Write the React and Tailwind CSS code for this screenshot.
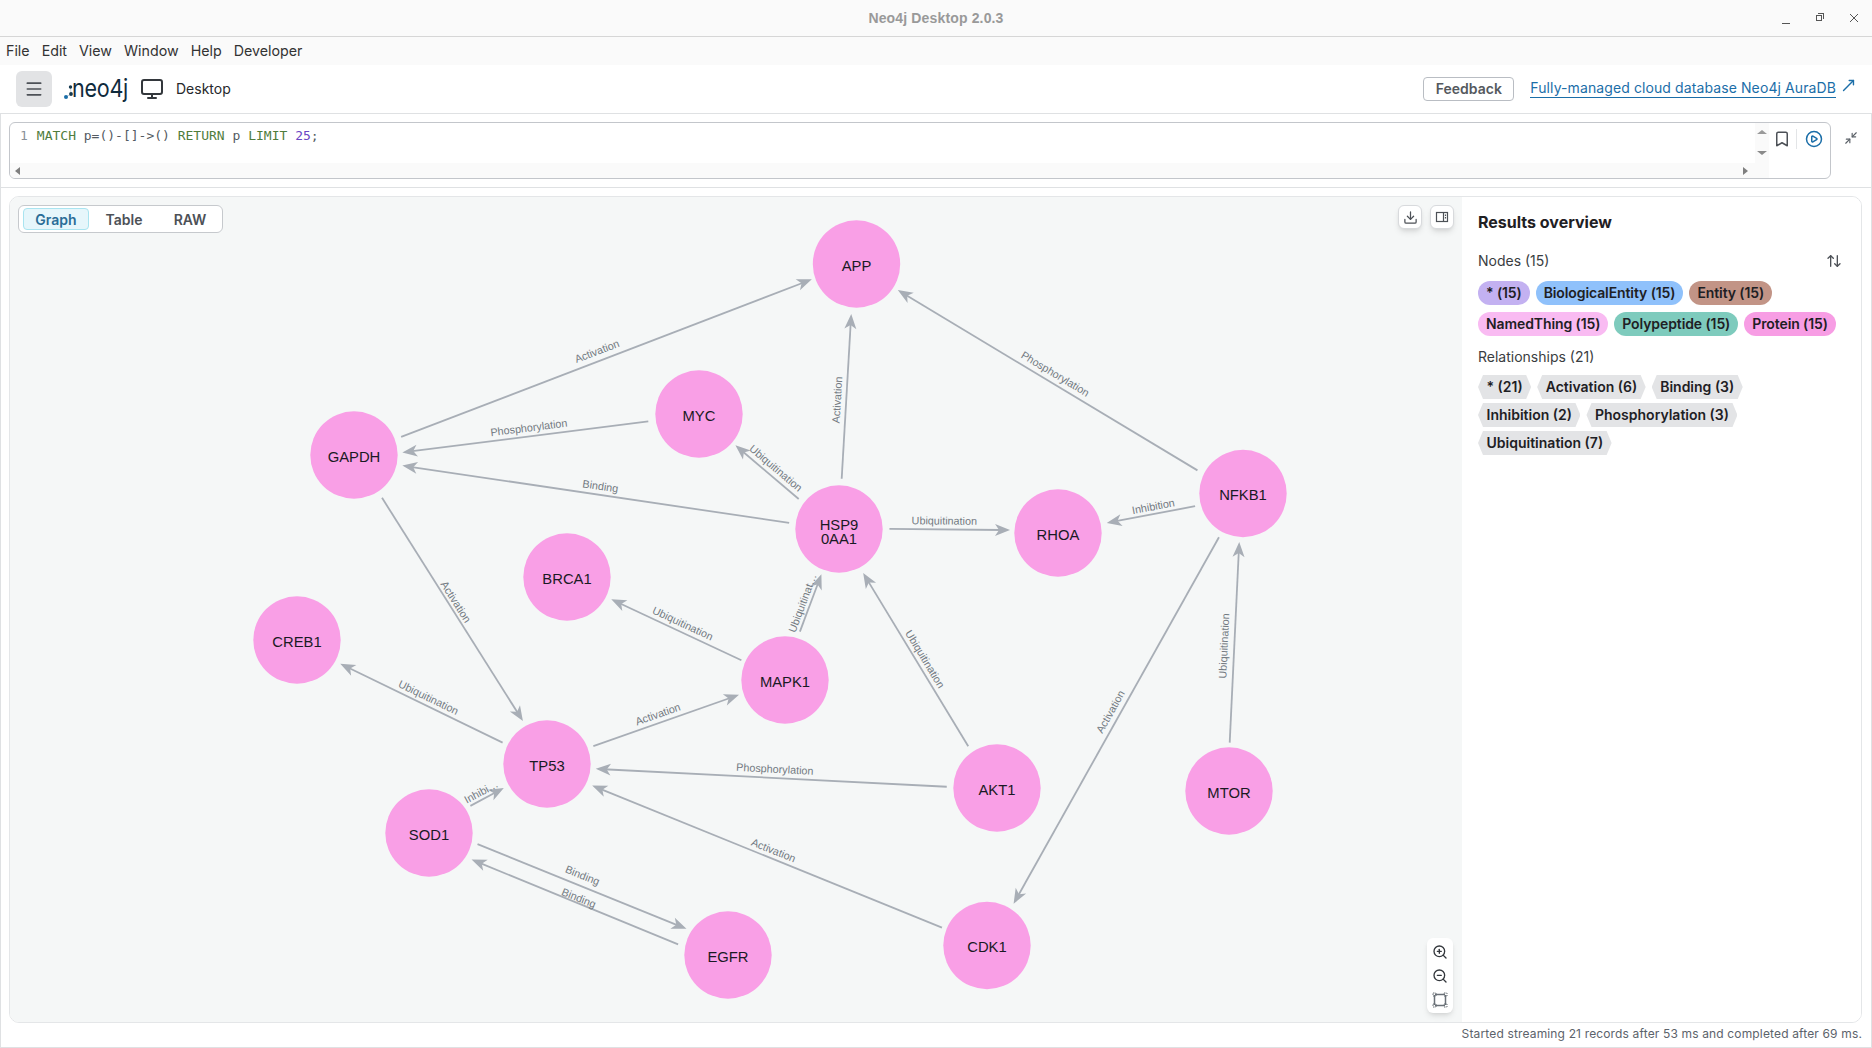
import { ArrowUpDown, Bookmark, CirclePlay, Download, Menu, Minimize2, Monitor, MoveUpRight, ZoomIn, ZoomOut } from "lucide-react";

const ui = "font-['Inter','Liberation_Sans',sans-serif]";
const s = 1872 / 1568;

const nodes = [
  { name: "APP", x: 856.5, y: 264 },
  { name: "MYC", x: 699, y: 414 },
  { name: "GAPDH", x: 354, y: 455 },
  { name: "HSP9", line2: "0AA1", x: 839, y: 529 },
  { name: "RHOA", x: 1058, y: 533 },
  { name: "NFKB1", x: 1243, y: 493.5 },
  { name: "BRCA1", x: 567, y: 577 },
  { name: "CREB1", x: 297, y: 640 },
  { name: "MAPK1", x: 785, y: 680 },
  { name: "TP53", x: 547, y: 764 },
  { name: "AKT1", x: 997, y: 788 },
  { name: "MTOR", x: 1229, y: 791 },
  { name: "SOD1", x: 429, y: 833 },
  { name: "EGFR", x: 728, y: 955 },
  { name: "CDK1", x: 987, y: 945.5 },
];

const edges = [
  { from: [336, 366], to: [680, 234], label: "Activation", at: [500, 294] },
  { from: [543, 353], to: [337, 379], label: "Phosphorylation", at: [443, 358] },
  { from: [661, 438], to: [337, 390], label: "Binding", at: [503, 407] },
  { from: [669, 418], to: [616, 373], label: "Ubiquitination", at: [650, 392] },
  { from: [705, 401], to: [713, 263], label: "Activation", at: [701, 335] },
  { from: [1003, 394], to: [752, 243], label: "Phosphorylation", at: [884, 313] },
  { from: [745, 443], to: [846, 444], label: "Ubiquitination", at: [791, 436] },
  { from: [1001, 424], to: [927, 438], label: "Inhibition", at: [966, 424] },
  { from: [320, 417], to: [438, 604], label: "Activation", at: [382, 504] },
  { from: [670, 529], to: [688, 481], label: "Ubiquitinat…", at: [672, 505] },
  { from: [621, 553], to: [512, 502], label: "Ubiquitination", at: [572, 522] },
  { from: [811, 625], to: [723, 480], label: "Ubiquitination", at: [775, 552] },
  { from: [421, 622], to: [285, 556], label: "Ubiquitination", at: [359, 584] },
  { from: [497, 625], to: [619, 582], label: "Activation", at: [551, 598] },
  { from: [793, 659], to: [499, 644], label: "Phosphorylation", at: [649, 644] },
  { from: [789, 777], to: [496, 658], label: "Activation", at: [648, 712] },
  { from: [1021, 450], to: [849, 757], label: "Activation", at: [930, 596] },
  { from: [1030, 622], to: [1038, 454], label: "Ubiquitination", at: [1025, 541] },
  { from: [394, 675], to: [422, 660], label: "Inhibi…", at: [403, 663] },
  { from: [400, 707], to: [575, 778], label: "Binding", at: [488, 733] },
  { from: [568, 791], to: [395, 720], label: "Binding", at: [485, 752] },
];

const nodeChips = [
  { label: "* (15)", color: "bg-[#c3b1f1]" },
  { label: "BiologicalEntity (15)", color: "bg-[#8fc1fb]" },
  { label: "Entity (15)", color: "bg-[#c29486]" },
  { label: "NamedThing (15)", color: "bg-[#f9bbf2]" },
  { label: "Polypeptide (15)", color: "bg-[#7ecbbd]" },
  { label: "Protein (15)", color: "bg-[#f79de4]" },
];

const relChips = ["* (21)", "Activation (6)", "Binding (3)", "Inhibition (2)", "Phosphorylation (3)", "Ubiquitination (7)"];

function Edge({ edge }) {
  const x1 = edge.from[0] * s;
  const y1 = edge.from[1] * s;
  const x2 = edge.to[0] * s;
  const y2 = edge.to[1] * s;
  const angle = (Math.atan2(y2 - y1, x2 - x1) * 180) / Math.PI;
  const upright = angle > 90 || angle < -90 ? angle + 180 : angle;
  return (
    <g>
      <line x1={x1} y1={y1} x2={x2 - 8 * Math.cos((angle * Math.PI) / 180)} y2={y2 - 8 * Math.sin((angle * Math.PI) / 180)} stroke="#a8aeb6" strokeWidth="1.8" />
      <polygon points="0,0 -15,-6 -11,0 -15,6" fill="#a8aeb6" transform={`translate(${x2} ${y2}) rotate(${angle})`} />
      <text
        x={edge.at[0] * s}
        y={edge.at[1] * s}
        transform={`rotate(${upright} ${edge.at[0] * s} ${edge.at[1] * s})`}
        textAnchor="middle"
        dominantBaseline="central"
        fontSize="10.8"
        fill="#737a82"
        fontFamily="Liberation Sans, sans-serif"
      >
        {edge.label}
      </text>
    </g>
  );
}

function GraphNode({ node }) {
  return (
    <g>
      <circle cx={node.x} cy={node.y} r="43.7" fill="#f99fe6" />
      <text textAnchor="middle" fontSize="14.8" fill="#1a1a24" fontFamily="Liberation Sans, sans-serif">
        {node.line2 ? (
          <>
            <tspan x={node.x} y={node.y + 1}>{node.name}</tspan>
            <tspan x={node.x} y={node.y + 15}>{node.line2}</tspan>
          </>
        ) : (
          <tspan x={node.x} y={node.y + 6.5}>{node.name}</tspan>
        )}
      </text>
    </g>
  );
}

function FitIcon() {
  return (
    <svg width="16" height="16" viewBox="0 0 16 16" fill="none" stroke="#6a7077" strokeWidth="1.5">
      <path d="M3 2.5h10M3 13.5h10M2.5 3v10M13.5 3v10" />
      <path d="M1 1h3v3H1zM12 1h3v3h-3zM1 12h3v3H1zM12 12h3v3h-3z" strokeWidth="1" strokeDasharray="1.5 1" />
    </svg>
  );
}

function SidePanelIcon() {
  return (
    <svg width="16" height="16" viewBox="0 0 16 16" fill="none" stroke="#4d5157" strokeWidth="1.2">
      <rect x="2.5" y="3.5" width="11" height="9" />
      <path d="M9.5 3.5v9" />
      <path d="M11.5 5.5v5" strokeDasharray="1.5 1" />
    </svg>
  );
}

function NeoLogo() {
  return (
    <div className="relative h-[28px] w-[66px]">
      <svg width="12" height="18" viewBox="0 0 12 18" className="absolute left-0 top-[9px]">
        <path d="M6.5 3L7 10L2 13" stroke="#9fb6c4" strokeWidth="0.6" fill="none" />
        <circle cx="6.5" cy="3" r="1.7" fill="#14394f" />
        <circle cx="7" cy="10" r="1.9" fill="#14394f" />
        <circle cx="2" cy="13" r="2" fill="#1b6ea8" />
      </svg>
      <span className="absolute left-[8px] top-[-3px] origin-left scale-x-[0.88] text-[24.5px] leading-[32px] tracking-[-0.3px] font-normal text-[#0f2b3d] font-['Inter',sans-serif]">neo4j</span>
    </div>
  );
}

export default function App() {
  return (
    <div className={`h-[1048px] w-[1872px] flex flex-col overflow-hidden bg-white text-[#1a1b1d] ${ui}`}>
      <div className="h-[37px] shrink-0 bg-[#fafafa] border-b border-[#d6d6d6] relative flex items-center justify-center">
        <span className="text-[14px] tracking-[0.15px] font-bold text-[#999999] font-['Liberation_Sans',sans-serif]">Neo4j Desktop 2.0.3</span>
        <div className="absolute right-[10px] top-[10px] flex items-center gap-[18px] text-[#555]">
          <span className="w-[16px] h-[16px] flex items-end justify-center pb-[2px]"><span className="block w-[8px] h-px bg-[#555]"></span></span>
          <span className="w-[16px] h-[16px] relative">
            <span className="absolute left-[4px] top-[5px] w-[6px] h-[6px] border border-[#555]"></span>
            <span className="absolute left-[6px] top-[3px] w-[6px] h-[6px] border-t border-r border-[#555]"></span>
          </span>
          <svg width="16" height="16" viewBox="0 0 16 16" stroke="#555" strokeWidth="1"><path d="M4 4l8 8M12 4l-8 8" /></svg>
        </div>
      </div>

      <div className="h-[28px] shrink-0 bg-[#fafafa] flex items-center px-[6px] gap-[12px] text-[14.25px] text-[#333] font-['Inter',sans-serif]">
        <span>File</span>
        <span>Edit</span>
        <span>View</span>
        <span>Window</span>
        <span>Help</span>
        <span>Developer</span>
      </div>

      <header className="h-[49px] shrink-0 flex items-center border-b border-[#dfe1e3] pl-[16px] pr-[15px]">
        <button className="w-[36px] h-[36px] rounded-[6px] bg-[#e2e3e5] flex items-center justify-center">
          <Menu size={20} color="#4d5157" />
        </button>
        <div className="ml-[12px]"><NeoLogo /></div>
        <Monitor size={24} color="#33373c" className="ml-[10px]" />
        <span className="ml-[12px] mb-[1px] text-[14px] text-[#26282b]">Desktop</span>
        <div className="ml-auto flex items-center mb-[1px]">
          <button className="w-[91px] h-[24px] rounded-[4px] border border-[#b9bdc3] text-[14px] font-semibold text-[#55595e]">Feedback</button>
          <a className="ml-[16px] text-[14px] tracking-[0.1px] leading-[18px] text-[#1b6ea8] border-b border-[#1b6ea8]">Fully-managed cloud database Neo4j AuraDB</a>
          <MoveUpRight size={17} color="#1b6ea8" className="ml-[4px] mb-[6px]" />
        </div>
      </header>

      <section className="h-[74px] shrink-0 border-x border-b border-[#dfe1e3] pl-[8px] pr-[6px] pt-[8px] flex">
        <div className="w-[1822px] h-[57px] rounded-[6px] border border-[#c3c6cb] flex overflow-hidden">
          <div className="w-[1759px] flex flex-col">
            <div className="h-[40px] flex">
              <div className="flex-1 pl-[10px] pt-[4px] text-[13px] leading-[18px] font-['DejaVu_Sans_Mono',monospace] whitespace-pre">
                <span className="text-[#8a9199]">1</span>
                <span className="ml-[9px] text-[#4f7d3c]">MATCH</span>
                <span className="text-[#545b62]"> p=()-[]-&gt;() </span>
                <span className="text-[#4f7d3c]">RETURN</span>
                <span className="text-[#545b62]"> p </span>
                <span className="text-[#4f7d3c]">LIMIT</span>
                <span className="text-[#6a46c4]"> 25</span>
                <span className="text-[#545b62]">;</span>
              </div>
              <div className="w-[14px] bg-[#fafafa] flex flex-col items-center justify-between pt-[7px] pb-[8px]">
                <span className="w-0 h-0 border-x-[5px] border-x-transparent border-b-[4px] border-b-[#9a9a9a]"></span>
                <span className="w-0 h-0 border-x-[5px] border-x-transparent border-t-[4px] border-t-[#8a8a8a]"></span>
              </div>
            </div>
            <div className="flex-1 bg-[#fafafa] flex items-center justify-between pl-[5px] pr-[21px]">
              <span className="w-0 h-0 border-y-[4px] border-y-transparent border-r-[5px] border-r-[#7f7f7f]"></span>
              <span className="w-0 h-0 border-y-[4px] border-y-transparent border-l-[5px] border-l-[#7f7f7f]"></span>
            </div>
          </div>
          <div className="flex-1 h-[31px] flex items-center pl-[4px]">
            <Bookmark size={18} color="#4d5157" />
            <span className="ml-[5px] w-px h-[20px] bg-[#e3e5e7]"></span>
            <CirclePlay size={18} color="#1b6ea8" className="ml-[8px]" />
          </div>
        </div>
        <Minimize2 size={14} color="#5b6168" className="ml-[13px] mt-[9px]" />
      </section>

      <main className="flex-1 min-h-0 pl-[8px] pr-[9px] pt-[8px] border-x border-b border-[#dfe1e3] flex flex-col">
        <div className="h-[827px] shrink-0 rounded-[10px] border border-[#e4e6e8] overflow-hidden flex">
          <div className="w-[1452px] shrink-0 bg-[#f5f7f7] relative">
            <svg width="1452" height="825" viewBox="10 197 1452 825" className="block">
              {edges.map((edge) => <Edge key={edge.from.join()} edge={edge} />)}
              {nodes.map((node) => <GraphNode key={node.name} node={node} />)}
            </svg>

            <div className="absolute left-[8px] top-[8px] w-[205px] h-[28px] rounded-[6px] bg-white border border-[#c6c9cd] flex items-center pl-[4px] text-[14px] font-semibold text-[#4d5157]">
              <span className="w-[66px] h-[22px] rounded-[4px] bg-[#e6f6fb] border border-[#a9e4f0] text-[#2a6d97] flex items-center justify-center">Graph</span>
              <span className="w-[70px] text-center">Table</span>
              <span className="w-[62px] text-center">RAW</span>
            </div>

            <div className="absolute right-[40px] top-[8px] w-[24px] h-[24px] rounded-[6px] bg-white border border-[#d8dadd] shadow-md flex items-center justify-center">
              <Download size={15} color="#4d5157" />
            </div>
            <div className="absolute right-[8px] top-[8px] w-[24px] h-[24px] rounded-[6px] bg-white border border-[#d8dadd] shadow-md flex items-center justify-center">
              <SidePanelIcon />
            </div>

            <div className="absolute right-[9px] bottom-[9px] w-[26px] h-[75px] rounded-[6px] bg-white shadow-md flex flex-col items-center justify-center gap-[8px]">
              <ZoomIn size={16} color="#33373c" />
              <ZoomOut size={16} color="#33373c" />
              <FitIcon />
            </div>
          </div>

          <aside className="flex-1 bg-white pl-[16px] pr-[16px] pt-[15px]">
            <h2 className="text-[16px] leading-[20px] font-bold text-[#1f2023]">Results overview</h2>
            <div className="mt-[19px] flex items-center justify-between pr-[3px]">
              <span className="text-[14px] leading-[20px] text-[#3a3d41]">Nodes (15)</span>
              <ArrowUpDown size={16} color="#4d5157" />
            </div>
            <div className="mt-[10px] flex flex-wrap gap-x-[6px] gap-y-[7px] tracking-[-0.1px]">
              {nodeChips.map((chip) => (
                <span key={chip.label} className={`h-[24px] rounded-full px-[8px] text-[14px] leading-[24px] font-semibold text-[#1e2024] ${chip.color}`}>{chip.label}</span>
              ))}
            </div>
            <p className="mt-[11px] text-[14px] leading-[20px] text-[#3a3d41]">Relationships (21)</p>
            <div className="mt-[8px] pr-[8px] flex flex-wrap gap-x-[6px] gap-y-[4px]">
              {relChips.map((chip) => (
                <span key={chip} className="h-[24px] px-[8.5px] bg-[#e3e4e6] text-[14px] leading-[24px] font-semibold text-[#1e2024] [clip-path:polygon(5px_0,calc(100%-5px)_0,100%_50%,calc(100%-5px)_100%,5px_100%,0_50%)]">{chip}</span>
              ))}
            </div>
          </aside>
        </div>
        <p className="mt-[3px] text-right text-[12px] tracking-[0.15px] leading-[16px] text-[#5c636b]">Started streaming 21 records after 53 ms and completed after 69 ms.</p>
      </main>
    </div>
  );
}
